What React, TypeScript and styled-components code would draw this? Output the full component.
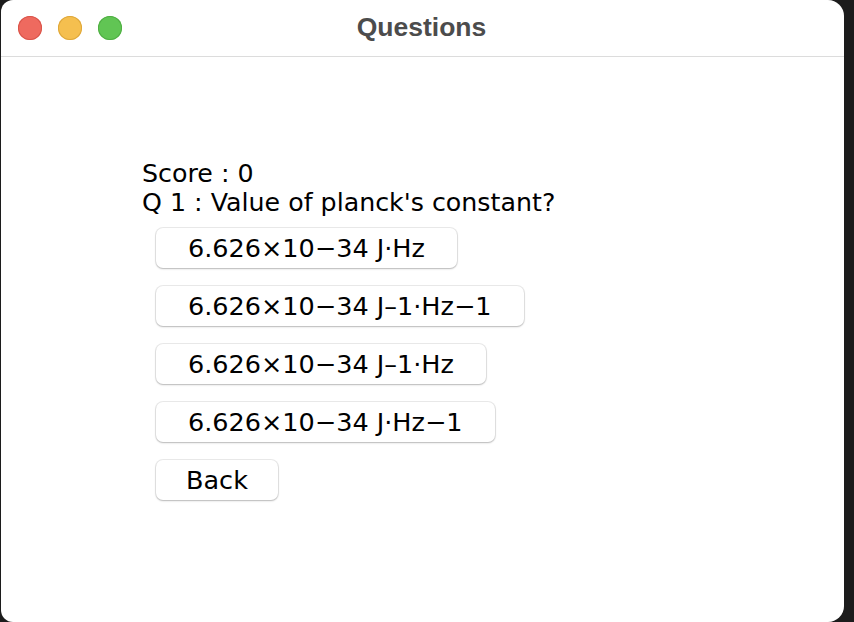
import React from "react";
import styled, { createGlobalStyle } from "styled-components";

const Global = createGlobalStyle`
  html, body { margin: 0; padding: 0; background: #1c1c1c; }
  body { width: 854px; height: 622px; overflow: hidden; }
`;

const Screen = styled.div`
  display: flex;
  height: 622px;
  padding-left: 1px;
`;

const Window = styled.div`
  width: 843px;
  height: 622px;
  background: #ffffff;
  border-radius: 12px 16px 16px 12px;
  display: flex;
  flex-direction: column;
  overflow: hidden;
`;

const TitleBar = styled.div`
  position: relative;
  height: 56px;
  border-bottom: 1px solid #dcdcdc;
  display: flex;
  align-items: center;
  justify-content: center;
  flex-shrink: 0;
`;

const Lights = styled.div`
  position: absolute;
  left: 17px;
  top: 16px;
  display: flex;
  gap: 16px;
`;

const Light = styled.span<{ $c: string; $b: string }>`
  width: 24px;
  height: 24px;
  border-radius: 50%;
  background: ${(p) => p.$c};
  box-shadow: inset 0 0 0 1px ${(p) => p.$b};
`;

const Title = styled.div`
  font-family: "Liberation Sans", Arial, sans-serif;
  font-weight: 700;
  font-size: 26.5px;
  color: #4c4c4c;
  margin: -1px 0 0 -2px;
`;

const Content = styled.div`
  padding: 102px 0 0 141px;
  display: flex;
  flex-direction: column;
  font-family: "DejaVu Sans", sans-serif;
  color: #000;
`;

const Label = styled.div`
  font-size: 25.3px;
  line-height: 29px;
`;

const Options = styled.div`
  display: flex;
  flex-direction: column;
  align-items: flex-start;
  gap: 18px;
  margin: 11px 0 0 14px;
`;

const Btn = styled.button<{ $pad?: number }>`
  height: 40px;
  padding: 0 ${(p) => p.$pad ?? 32}px;
  background: #fff;
  border: none;
  border-radius: 7px;
  box-shadow: 0 0 0 1px rgba(0, 0, 0, 0.08), 0 1px 2px rgba(0, 0, 0, 0.22);
  font-family: "DejaVu Sans", sans-serif;
  font-size: 25.5px;
  color: #000;
  cursor: pointer;
`;

const options = [
  "6.626×10−34 J·Hz",
  "6.626×10−34 J–1·Hz−1",
  "6.626×10−34 J–1·Hz",
  "6.626×10−34 J·Hz−1",
];

export default function App() {
  return (
    <>
      <Global />
      <Screen>
        <Window>
          <TitleBar>
            <Lights>
              <Light $c="#ee6a5f" $b="#d9544a" />
              <Light $c="#f5bf4f" $b="#dea73a" />
              <Light $c="#61c554" $b="#4fae43" />
            </Lights>
            <Title>Questions</Title>
          </TitleBar>
          <Content>
            <Label>Score : 0</Label>
            <Label>Q 1 : Value of planck's constant?</Label>
            <Options>
              {options.map((o) => (
                <Btn key={o}>{o}</Btn>
              ))}
              <Btn $pad={30}>Back</Btn>
            </Options>
          </Content>
        </Window>
      </Screen>
    </>
  );
}
